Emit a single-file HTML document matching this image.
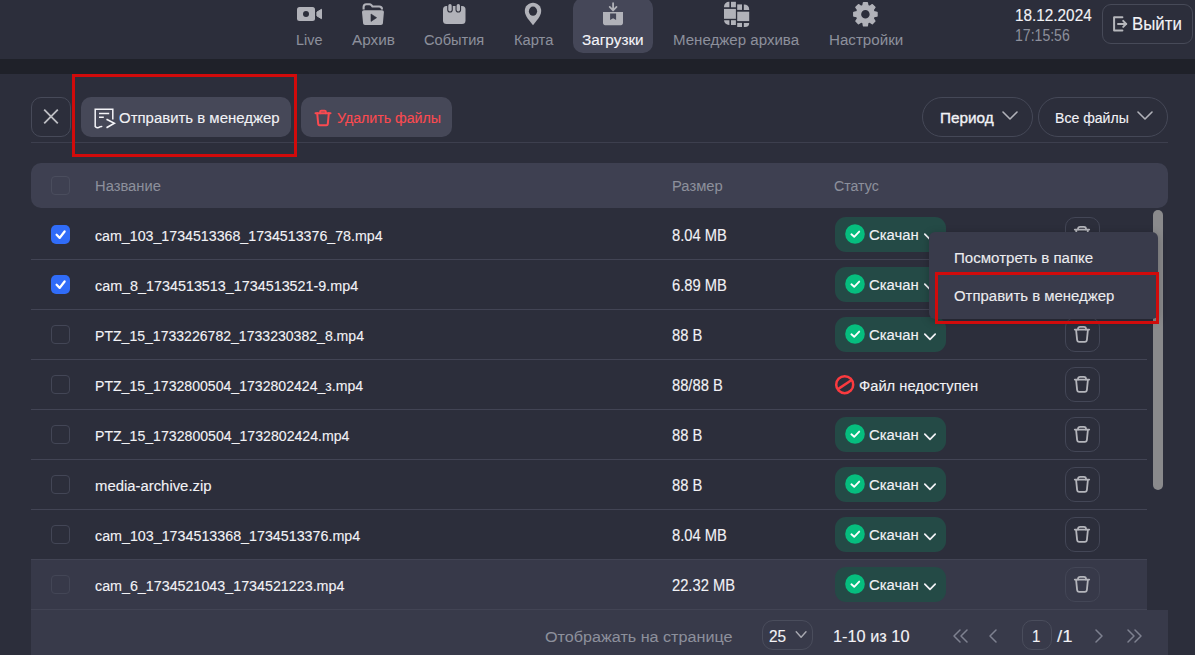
<!DOCTYPE html><html><head><meta charset="utf-8"><style>*{box-sizing:border-box;margin:0;padding:0}
html,body{width:1195px;height:655px;overflow:hidden;background:#2c2e3b;font-family:"Liberation Sans",sans-serif;color:#f2f2f6}
.a{position:absolute}
.hdr{left:0;top:0;width:1195px;height:59px;background:#2c2e3b}
.band{left:0;top:59px;width:1195px;height:15px;background:#1f2129}
.navt{top:30px;text-align:center;color:#8d909c;font-size:15px;line-height:18px;white-space:nowrap}
.navt.act{color:#f4f4f8}
.active{background:#454758;border-radius:10px}
.btn{border-radius:10px;background:#464858}
.lbl{white-space:nowrap;line-height:18px}
.sep{height:1px;background:#3d3f4e}
.rowsep{left:31px;width:1116px;height:1px;background:#424454}
.cb{left:51px;width:19px;height:19px;border:1.5px solid #434656;border-radius:4px}
.cbon{background:#306cf8;border:none;border-radius:5px}
.cb svg{position:absolute;left:0;top:0}
.fn{left:95px;font-size:14.2px;white-space:nowrap;line-height:18px}
.sz{left:672px;font-size:14.4px;white-space:nowrap;line-height:18px}
.badge{left:835px;width:111px;height:35px;border-radius:11px;background:#244a46}
.badge .ck{position:absolute;left:9.5px;top:7px;width:20px;height:20px}
.badge .ck svg{display:block}
.badge .bt{position:absolute;left:34px;top:8px;font-size:14.6px;line-height:18px}
.badge svg.chev{position:absolute;left:88px;top:15px}
.trash{left:1065px;width:35px;height:35px;border:1px solid #434656;border-radius:10px}
.tx{white-space:nowrap;transform-origin:0 0;-webkit-text-stroke:0.12px currentColor}
</style></head><body>
<div class="a hdr"></div><div class="a band"></div>
<div class="a active" style="left:573px;top:-2px;width:80px;height:55px"></div>
<svg class="a" style="left:297px;top:6px" width="26" height="16" viewBox="0 0 26 16"><rect x="0" y="1" width="18" height="14" rx="2.5" fill="#b1b2b9"/><circle cx="9" cy="8" r="3" fill="#2c2e3b"/><path d="M19.9 6.1 L24.5 3.3 V12.7 L19.9 9.9 Z" fill="#b1b2b9" stroke="#b1b2b9" stroke-width="1" stroke-linejoin="round"/></svg>
<svg class="a" style="left:361px;top:2px" width="24" height="24" viewBox="0 0 24 24"><path d="M2.6 7.6V5c0-1.6 1.1-2.8 2.7-2.8h3.1c.8 0 1.5.4 2 1l1 1.3h6.7c1.7 0 2.9 1.2 2.9 2.7v.4" fill="none" stroke="#b1b2b9" stroke-width="2.1"/><path d="M1 10.2c0-1.1.8-1.9 1.9-1.9h18.2c1.1 0 1.9.9 1.8 2l-1 11c-.1 1-.9 1.7-1.9 1.7H4c-1 0-1.8-.7-1.9-1.7z" fill="#b1b2b9"/><path d="M10 12v7.4l5.6-3.7z" fill="#2c2e3b" stroke="#2c2e3b" stroke-width=".6" stroke-linejoin="round"/></svg>
<svg class="a" style="left:442px;top:3px" width="24" height="22" viewBox="0 0 24 22"><rect x="1" y="3" width="22.5" height="18" rx="3.5" fill="#b1b2b9"/><rect x="5.2" y="0" width="5.6" height="9.5" rx="2.8" fill="#2c2e3b"/><rect x="13.5" y="0" width="5.6" height="9.5" rx="2.8" fill="#2c2e3b"/><rect x="6.3" y="1" width="3.4" height="7.5" rx="1.7" fill="#b1b2b9"/><rect x="14.6" y="1" width="3.4" height="7.5" rx="1.7" fill="#b1b2b9"/></svg>
<svg class="a" style="left:524px;top:2px" width="18" height="24" viewBox="0 0 18 24"><path d="M9 .8C4.3.8.8 4.4.8 9c0 2.6 1.3 5.2 2.9 7.6L9 23.2l5.3-6.6c1.6-2.4 2.9-5 2.9-7.6C17.2 4.4 13.7.8 9 .8z" fill="#b1b2b9"/><ellipse cx="9" cy="9.2" rx="4.1" ry="4.6" fill="#2c2e3b"/></svg>
<svg class="a" style="left:602px;top:2px" width="22" height="24" viewBox="0 0 22 24"><path d="M11.1 1.2V8.4M7.7 4.9L11.1 8.3L14.5 4.9" fill="none" stroke="#b1b2b9" stroke-width="1.8" stroke-linecap="round" stroke-linejoin="round"/><path d="M1 10H21V21.1c0 1.2-.9 2.1-2.1 2.1H3.1C1.9 23.2 1 22.3 1 21.1Z" fill="#b1b2b9"/><path d="M8.1 11.4H14.1V17.9L11.1 16.3L8.1 17.9Z" fill="#454758"/></svg>
<svg class="a" style="left:718px;top:0px" width="40" height="30" viewBox="0 0 40 30" fill="#b1b2b9"><path d="M6 7.3V6.8A5 5 0 0 1 11 1.8H11.4V7.3Z"/><rect x="13" y="1.8" width="4.9" height="5.5"/><rect x="6" y="8.9" width="11.9" height="9.9"/><path d="M6 20.2V20A5 5 0 0 0 11 25H11.4V20.2Z"/><rect x="13" y="20.2" width="4.9" height="4.8"/><rect x="19.2" y="4.4" width="4.8" height="5.5"/><path d="M25.8 4.4H26.2A5 5 0 0 1 31.2 9.4V9.9H25.8Z"/><rect x="19.2" y="11.7" width="12" height="9.4"/><rect x="19.2" y="22.9" width="4.8" height="4.1"/><path d="M25.8 22.9H31.2V23A4 4 0 0 1 27.2 27H25.8Z"/></svg>
<svg class="a" style="left:848px;top:0px" width="35" height="30" viewBox="0 0 35 30"><path fill="#b1b2b9" fill-rule="evenodd" stroke="#b1b2b9" stroke-width="1.5" stroke-linejoin="round" d="M14.97 5.74 L15.57 2.64 L19.23 2.64 L19.83 5.74 L21.67 6.50 L24.28 4.73 L26.87 7.32 L25.10 9.93 L25.86 11.77 L28.96 12.37 L28.96 16.03 L25.86 16.63 L25.10 18.47 L26.87 21.08 L24.28 23.67 L21.67 21.90 L19.83 22.66 L19.23 25.76 L15.57 25.76 L14.97 22.66 L13.13 21.90 L10.52 23.67 L7.93 21.08 L9.70 18.47 L8.94 16.63 L5.84 16.03 L5.84 12.37 L8.94 11.77 L9.70 9.93 L7.93 7.32 L10.52 4.73 L13.13 6.50Z M22.40 14.20A5.0 5.0 0 1 0 12.40 14.20A5.0 5.0 0 1 0 22.40 14.20Z"/></svg>
<!-- date/time -->
<div class="a" style="left:1102px;top:4px;width:91px;height:40px;border:1px solid #474a58;border-radius:9px"></div>
<svg class="a" style="left:1110px;top:14px" width="20" height="20" viewBox="0 0 20 20" fill="none" stroke="#b6b7bc" stroke-width="2" stroke-linecap="round" stroke-linejoin="round"><path d="M12.4 3.2H4.1V16.4H12.4"/><path d="M8 9.9H16.2"/><path d="M13.2 6.9L16.2 9.9L13.2 12.9"/></svg>

<!-- toolbar -->
<div class="a" style="left:31px;top:97px;width:40px;height:40px;border:1px solid #474a59;border-radius:10px"></div>
<svg class="a" style="left:41px;top:107px" width="20" height="20" viewBox="0 0 20 20" stroke="#bdbec3" stroke-width="1.8" stroke-linecap="butt"><path d="M3.2 2.7l13.6 13.6M16.8 2.7l-13.6 13.6"/></svg>
<div class="a btn" style="left:81px;top:97px;width:210px;height:40px"></div>
<svg class="a" style="left:94px;top:108px" width="22" height="22" viewBox="0 0 22 22" fill="none" stroke="#f4f4f8" stroke-width="1.5" stroke-linejoin="miter" stroke-linecap="butt"><path d="M1.2 19V1.2H18.8V11.5"/><path d="M1.2 18.6c1.6 1.4 3.2 1.4 4.6.3 .8-.6 1.6-.7 2.5-.2"/><path d="M5 5.5H15.2M5 9.2H9.8" stroke-width="1.6"/><path d="M12.5 11.2L20.4 15.3L12.5 19.8" stroke-width="1.7"/></svg>
<div class="a btn" style="left:301px;top:97px;width:151px;height:40px"></div>
<svg class="a" style="left:314px;top:109px" width="18" height="18" viewBox="0 0 18 18" fill="none" stroke="#fa4a50" stroke-width="2" stroke-linecap="round" stroke-linejoin="round"><path d="M1.5 4.2h15"/><path d="M6.2 4.2V2.8c0-.6.5-1.1 1.1-1.1h3.4c.6 0 1.1.5 1.1 1.1v1.4"/><path d="M3.2 4.2l1 10.8c.1.7.6 1.2 1.3 1.2h7c.7 0 1.2-.5 1.3-1.2l1-10.8"/></svg>
<div class="a" style="left:922px;top:97px;width:111px;height:40px;border:1px solid #454857;border-radius:20px"></div>
<svg class="a" style="left:1002px;top:110px" width="16" height="12" viewBox="0 0 16 12" fill="none" stroke="#b1b2b9" stroke-width="1.6" stroke-linecap="round" stroke-linejoin="round"><path d="M1 2l7 7 7-7"/></svg>
<div class="a" style="left:1038px;top:97px;width:130px;height:40px;border:1px solid #454857;border-radius:20px"></div>
<svg class="a" style="left:1137px;top:110px" width="16" height="12" viewBox="0 0 16 12" fill="none" stroke="#b1b2b9" stroke-width="1.6" stroke-linecap="round" stroke-linejoin="round"><path d="M1 2l7 7 7-7"/></svg>
<div class="a sep" style="left:31px;top:142px;width:1137px"></div>

<!-- table header -->
<div class="a" style="left:31px;top:163px;width:1137px;height:45px;background:#3e4051;border-radius:10px"></div>
<div class="a cb" style="top:176px;border-color:#4a4d5d"></div>

<div class="a cb cbon" style="top:225px"><svg width="19" height="19" viewBox="0 0 19 19"><path d="M5.6 9.8L8.7 12.9L13.6 6.5" fill="none" stroke="#fff" stroke-width="2.3" stroke-linecap="round" stroke-linejoin="round"/></svg></div>
<div class="a badge" style="top:217px"><div class="ck"><svg width="20" height="20" viewBox="0 0 20 20"><circle cx="10" cy="10" r="9.8" fill="#06be7e"/><path d="M6.4 10.3L9.2 12.8L14.2 7.6" fill="none" stroke="#fff" stroke-width="1.9" stroke-linecap="round" stroke-linejoin="round"/></svg></div><svg class="chev" width="14" height="10" viewBox="0 0 14 10" fill="none" stroke="#f2f2f6" stroke-width="1.7" stroke-linecap="round" stroke-linejoin="round"><path d="M1.8 2.2L7 7.4L12.2 2.2"/></svg></div>
<div class="a trash" style="top:217px"></div><svg class="a" style="left:1073px;top:225px" width="18" height="19" viewBox="0 0 18 19" fill="none" stroke="#b4b5bb" stroke-width="1.8" stroke-linecap="round" stroke-linejoin="round"><path d="M1.8 4.6H16.2"/><path d="M5 4.6V3.9C5 2.6 5.8 1.9 7.1 1.9H10.9C12.2 1.9 13 2.6 13 3.9V4.6"/><path d="M3.1 4.8L4.1 14.8C4.2 16.1 5 16.9 6.3 16.9H11.7C13 16.9 13.8 16.1 13.9 14.8L14.9 4.8"/></svg>
<div class="a rowsep" style="top:259px"></div>
<div class="a cb cbon" style="top:275px"><svg width="19" height="19" viewBox="0 0 19 19"><path d="M5.6 9.8L8.7 12.9L13.6 6.5" fill="none" stroke="#fff" stroke-width="2.3" stroke-linecap="round" stroke-linejoin="round"/></svg></div>
<div class="a badge" style="top:267px"><div class="ck"><svg width="20" height="20" viewBox="0 0 20 20"><circle cx="10" cy="10" r="9.8" fill="#06be7e"/><path d="M6.4 10.3L9.2 12.8L14.2 7.6" fill="none" stroke="#fff" stroke-width="1.9" stroke-linecap="round" stroke-linejoin="round"/></svg></div><svg class="chev" width="14" height="10" viewBox="0 0 14 10" fill="none" stroke="#f2f2f6" stroke-width="1.7" stroke-linecap="round" stroke-linejoin="round"><path d="M1.8 2.2L7 7.4L12.2 2.2"/></svg></div>
<div class="a trash" style="top:267px"></div><svg class="a" style="left:1073px;top:275px" width="18" height="19" viewBox="0 0 18 19" fill="none" stroke="#b4b5bb" stroke-width="1.8" stroke-linecap="round" stroke-linejoin="round"><path d="M1.8 4.6H16.2"/><path d="M5 4.6V3.9C5 2.6 5.8 1.9 7.1 1.9H10.9C12.2 1.9 13 2.6 13 3.9V4.6"/><path d="M3.1 4.8L4.1 14.8C4.2 16.1 5 16.9 6.3 16.9H11.7C13 16.9 13.8 16.1 13.9 14.8L14.9 4.8"/></svg>
<div class="a rowsep" style="top:309px"></div>
<div class="a cb" style="top:325px"></div>
<div class="a badge" style="top:317px"><div class="ck"><svg width="20" height="20" viewBox="0 0 20 20"><circle cx="10" cy="10" r="9.8" fill="#06be7e"/><path d="M6.4 10.3L9.2 12.8L14.2 7.6" fill="none" stroke="#fff" stroke-width="1.9" stroke-linecap="round" stroke-linejoin="round"/></svg></div><svg class="chev" width="14" height="10" viewBox="0 0 14 10" fill="none" stroke="#f2f2f6" stroke-width="1.7" stroke-linecap="round" stroke-linejoin="round"><path d="M1.8 2.2L7 7.4L12.2 2.2"/></svg></div>
<div class="a trash" style="top:317px"></div><svg class="a" style="left:1073px;top:325px" width="18" height="19" viewBox="0 0 18 19" fill="none" stroke="#b4b5bb" stroke-width="1.8" stroke-linecap="round" stroke-linejoin="round"><path d="M1.8 4.6H16.2"/><path d="M5 4.6V3.9C5 2.6 5.8 1.9 7.1 1.9H10.9C12.2 1.9 13 2.6 13 3.9V4.6"/><path d="M3.1 4.8L4.1 14.8C4.2 16.1 5 16.9 6.3 16.9H11.7C13 16.9 13.8 16.1 13.9 14.8L14.9 4.8"/></svg>
<div class="a rowsep" style="top:359px"></div>
<div class="a cb" style="top:375px"></div>
<svg class="a" style="left:834px;top:374px" width="21" height="21" viewBox="0 0 21 21" fill="none" stroke="#fb3a3f" stroke-width="2.5"><circle cx="10.7" cy="10.7" r="8.5"/><path d="M4 15.1L17.3 6.3"/></svg>
<div class="a trash" style="top:367px"></div><svg class="a" style="left:1073px;top:375px" width="18" height="19" viewBox="0 0 18 19" fill="none" stroke="#b4b5bb" stroke-width="1.8" stroke-linecap="round" stroke-linejoin="round"><path d="M1.8 4.6H16.2"/><path d="M5 4.6V3.9C5 2.6 5.8 1.9 7.1 1.9H10.9C12.2 1.9 13 2.6 13 3.9V4.6"/><path d="M3.1 4.8L4.1 14.8C4.2 16.1 5 16.9 6.3 16.9H11.7C13 16.9 13.8 16.1 13.9 14.8L14.9 4.8"/></svg>
<div class="a rowsep" style="top:409px"></div>
<div class="a cb" style="top:425px"></div>
<div class="a badge" style="top:417px"><div class="ck"><svg width="20" height="20" viewBox="0 0 20 20"><circle cx="10" cy="10" r="9.8" fill="#06be7e"/><path d="M6.4 10.3L9.2 12.8L14.2 7.6" fill="none" stroke="#fff" stroke-width="1.9" stroke-linecap="round" stroke-linejoin="round"/></svg></div><svg class="chev" width="14" height="10" viewBox="0 0 14 10" fill="none" stroke="#f2f2f6" stroke-width="1.7" stroke-linecap="round" stroke-linejoin="round"><path d="M1.8 2.2L7 7.4L12.2 2.2"/></svg></div>
<div class="a trash" style="top:417px"></div><svg class="a" style="left:1073px;top:425px" width="18" height="19" viewBox="0 0 18 19" fill="none" stroke="#b4b5bb" stroke-width="1.8" stroke-linecap="round" stroke-linejoin="round"><path d="M1.8 4.6H16.2"/><path d="M5 4.6V3.9C5 2.6 5.8 1.9 7.1 1.9H10.9C12.2 1.9 13 2.6 13 3.9V4.6"/><path d="M3.1 4.8L4.1 14.8C4.2 16.1 5 16.9 6.3 16.9H11.7C13 16.9 13.8 16.1 13.9 14.8L14.9 4.8"/></svg>
<div class="a rowsep" style="top:459px"></div>
<div class="a cb" style="top:475px"></div>
<div class="a badge" style="top:467px"><div class="ck"><svg width="20" height="20" viewBox="0 0 20 20"><circle cx="10" cy="10" r="9.8" fill="#06be7e"/><path d="M6.4 10.3L9.2 12.8L14.2 7.6" fill="none" stroke="#fff" stroke-width="1.9" stroke-linecap="round" stroke-linejoin="round"/></svg></div><svg class="chev" width="14" height="10" viewBox="0 0 14 10" fill="none" stroke="#f2f2f6" stroke-width="1.7" stroke-linecap="round" stroke-linejoin="round"><path d="M1.8 2.2L7 7.4L12.2 2.2"/></svg></div>
<div class="a trash" style="top:467px"></div><svg class="a" style="left:1073px;top:475px" width="18" height="19" viewBox="0 0 18 19" fill="none" stroke="#b4b5bb" stroke-width="1.8" stroke-linecap="round" stroke-linejoin="round"><path d="M1.8 4.6H16.2"/><path d="M5 4.6V3.9C5 2.6 5.8 1.9 7.1 1.9H10.9C12.2 1.9 13 2.6 13 3.9V4.6"/><path d="M3.1 4.8L4.1 14.8C4.2 16.1 5 16.9 6.3 16.9H11.7C13 16.9 13.8 16.1 13.9 14.8L14.9 4.8"/></svg>
<div class="a rowsep" style="top:509px"></div>
<div class="a cb" style="top:525px"></div>
<div class="a badge" style="top:517px"><div class="ck"><svg width="20" height="20" viewBox="0 0 20 20"><circle cx="10" cy="10" r="9.8" fill="#06be7e"/><path d="M6.4 10.3L9.2 12.8L14.2 7.6" fill="none" stroke="#fff" stroke-width="1.9" stroke-linecap="round" stroke-linejoin="round"/></svg></div><svg class="chev" width="14" height="10" viewBox="0 0 14 10" fill="none" stroke="#f2f2f6" stroke-width="1.7" stroke-linecap="round" stroke-linejoin="round"><path d="M1.8 2.2L7 7.4L12.2 2.2"/></svg></div>
<div class="a trash" style="top:517px"></div><svg class="a" style="left:1073px;top:525px" width="18" height="19" viewBox="0 0 18 19" fill="none" stroke="#b4b5bb" stroke-width="1.8" stroke-linecap="round" stroke-linejoin="round"><path d="M1.8 4.6H16.2"/><path d="M5 4.6V3.9C5 2.6 5.8 1.9 7.1 1.9H10.9C12.2 1.9 13 2.6 13 3.9V4.6"/><path d="M3.1 4.8L4.1 14.8C4.2 16.1 5 16.9 6.3 16.9H11.7C13 16.9 13.8 16.1 13.9 14.8L14.9 4.8"/></svg>
<div class="a rowsep" style="top:559px"></div>
<div class="a" style="left:31px;top:560px;width:1116px;height:50px;background:#373949"></div>
<div class="a cb" style="top:575px"></div>
<div class="a badge" style="top:567px"><div class="ck"><svg width="20" height="20" viewBox="0 0 20 20"><circle cx="10" cy="10" r="9.8" fill="#06be7e"/><path d="M6.4 10.3L9.2 12.8L14.2 7.6" fill="none" stroke="#fff" stroke-width="1.9" stroke-linecap="round" stroke-linejoin="round"/></svg></div><svg class="chev" width="14" height="10" viewBox="0 0 14 10" fill="none" stroke="#f2f2f6" stroke-width="1.7" stroke-linecap="round" stroke-linejoin="round"><path d="M1.8 2.2L7 7.4L12.2 2.2"/></svg></div>
<div class="a trash" style="top:567px"></div><svg class="a" style="left:1073px;top:575px" width="18" height="19" viewBox="0 0 18 19" fill="none" stroke="#b4b5bb" stroke-width="1.8" stroke-linecap="round" stroke-linejoin="round"><path d="M1.8 4.6H16.2"/><path d="M5 4.6V3.9C5 2.6 5.8 1.9 7.1 1.9H10.9C12.2 1.9 13 2.6 13 3.9V4.6"/><path d="M3.1 4.8L4.1 14.8C4.2 16.1 5 16.9 6.3 16.9H11.7C13 16.9 13.8 16.1 13.9 14.8L14.9 4.8"/></svg>
<div class="a rowsep" style="top:609px"></div>
<!-- footer -->
<div class="a" style="left:31px;top:610px;width:1137px;height:45px;background:#383a4a"></div>
<div class="a" style="left:762px;top:620px;width:51px;height:30px;border:1px solid #4a4d5c;border-radius:11px"></div>
<svg class="a" style="left:795px;top:630px" width="13" height="10" viewBox="0 0 13 10" fill="none" stroke="#a9aab2" stroke-width="1.4" stroke-linecap="round" stroke-linejoin="round"><path d="M1.2 1.8L6.1 7.2L11 1.8"/></svg>
<svg class="a" style="left:952px;top:629px" width="18" height="14" viewBox="0 0 18 14" fill="none" stroke="#7e8190" stroke-width="1.5" stroke-linecap="round" stroke-linejoin="round"><path d="M8 1L2 7l6 6M15 1L9 7l6 6"/></svg>
<svg class="a" style="left:987px;top:629px" width="12" height="14" viewBox="0 0 12 14" fill="none" stroke="#7e8190" stroke-width="1.5" stroke-linecap="round" stroke-linejoin="round"><path d="M9 1L3 7l6 6"/></svg>
<div class="a" style="left:1022px;top:620px;width:30px;height:30px;border:1px solid #4a4d5c;border-radius:10px"></div>
<svg class="a" style="left:1093px;top:629px" width="12" height="14" viewBox="0 0 12 14" fill="none" stroke="#7e8190" stroke-width="1.5" stroke-linecap="round" stroke-linejoin="round"><path d="M3 1l6 6-6 6"/></svg>
<svg class="a" style="left:1125px;top:629px" width="18" height="14" viewBox="0 0 18 14" fill="none" stroke="#7e8190" stroke-width="1.5" stroke-linecap="round" stroke-linejoin="round"><path d="M3 1l6 6-6 6M10 1l6 6-6 6"/></svg>

<!-- scrollbar -->
<div class="a" style="left:1153px;top:210px;width:10px;height:280px;border-radius:5px;background:#8a8a8c"></div>

<div class="a tx" style="left:296.05px;top:31.98px;font-size:15.50px;line-height:15.50px;color:#8d909c;font-weight:400;transform:scaleX(0.9282);-webkit-text-stroke:0.05px currentColor">Live</div>
<div class="a tx" style="left:351.61px;top:31.98px;font-size:15.50px;line-height:15.50px;color:#8d909c;font-weight:400;transform:scaleX(0.9871);-webkit-text-stroke:0.05px currentColor">Архив</div>
<div class="a tx" style="left:423.74px;top:31.98px;font-size:15.50px;line-height:15.50px;color:#8d909c;font-weight:400;transform:scaleX(0.9411);-webkit-text-stroke:0.05px currentColor">События</div>
<div class="a tx" style="left:513.54px;top:31.98px;font-size:15.50px;line-height:15.50px;color:#8d909c;font-weight:400;transform:scaleX(0.9479);-webkit-text-stroke:0.05px currentColor">Карта</div>
<div class="a tx" style="left:582.11px;top:31.98px;font-size:15.50px;line-height:15.50px;color:#f4f4f8;font-weight:400;transform:scaleX(0.9886)">Загрузки</div>
<div class="a tx" style="left:672.82px;top:31.98px;font-size:15.50px;line-height:15.50px;color:#8d909c;font-weight:400;transform:scaleX(0.9721);-webkit-text-stroke:0.05px currentColor">Менеджер архива</div>
<div class="a tx" style="left:828.62px;top:31.98px;font-size:15.50px;line-height:15.50px;color:#8d909c;font-weight:400;transform:scaleX(0.9769);-webkit-text-stroke:0.05px currentColor">Настройки</div>
<div class="a tx" style="left:1015.31px;top:7.91px;font-size:15.70px;line-height:15.70px;color:#f2f2f6;font-weight:400;transform:scaleX(0.9766)">18.12.2024</div>
<div class="a tx" style="left:1015.37px;top:27.51px;font-size:15.70px;line-height:15.70px;color:#8d909c;font-weight:400;transform:scaleX(0.8967);-webkit-text-stroke:0.05px currentColor">17:15:56</div>
<div class="a tx" style="left:1132.04px;top:14.61px;font-size:18.30px;line-height:18.30px;color:#f2f2f6;font-weight:400;transform:scaleX(0.9220)">Выйти</div>
<div class="a tx" style="left:119.33px;top:109.98px;font-size:15.50px;line-height:15.50px;color:#f2f2f6;font-weight:400;transform:scaleX(0.9643)">Отправить в менеджер</div>
<div class="a tx" style="left:337.16px;top:109.88px;font-size:15.50px;line-height:15.50px;color:#fb4a50;font-weight:400;transform:scaleX(0.9136)">Удалить файлы</div>
<div class="a tx" style="left:939.71px;top:109.88px;font-size:15.50px;line-height:15.50px;color:#f2f2f6;font-weight:400;transform:scaleX(0.9872);-webkit-text-stroke:0.35px currentColor">Период</div>
<div class="a tx" style="left:1054.67px;top:109.88px;font-size:15.50px;line-height:15.50px;color:#f2f2f6;font-weight:400;transform:scaleX(0.9081)">Все файлы</div>
<div class="a tx" style="left:94.84px;top:177.88px;font-size:15.50px;line-height:15.50px;color:#8d909c;font-weight:400;transform:scaleX(0.9503);-webkit-text-stroke:0.05px currentColor">Название</div>
<div class="a tx" style="left:671.54px;top:178.18px;font-size:15.50px;line-height:15.50px;color:#8d909c;font-weight:400;transform:scaleX(0.9521);-webkit-text-stroke:0.05px currentColor">Размер</div>
<div class="a tx" style="left:833.66px;top:178.18px;font-size:15.50px;line-height:15.50px;color:#8d909c;font-weight:400;transform:scaleX(0.9138);-webkit-text-stroke:0.05px currentColor">Статус</div>
<div class="a tx" style="left:545.17px;top:628.78px;font-size:15.50px;line-height:15.50px;color:#8d909c;font-weight:400;transform:scaleX(1.0416);-webkit-text-stroke:0.05px currentColor">Отображать на странице</div>
<div class="a tx" style="left:768.91px;top:628.61px;font-size:15.70px;line-height:15.70px;color:#f2f2f6;font-weight:400;transform:scaleX(0.9788)">25</div>
<div class="a tx" style="left:833.27px;top:628.61px;font-size:15.70px;line-height:15.70px;color:#f2f2f6;font-weight:400;transform:scaleX(1.0400)">1-10 из 10</div>
<div class="a tx" style="left:1032.32px;top:628.61px;font-size:15.70px;line-height:15.70px;color:#f2f2f6;font-weight:400;transform:scaleX(0.9594)">1</div>
<div class="a tx" style="left:1056.67px;top:628.61px;font-size:15.70px;line-height:15.70px;color:#f2f2f6;font-weight:400;transform:scaleX(1.1814)">/1</div>
<div class="a tx" style="left:94.86px;top:227.68px;font-size:15.50px;line-height:15.50px;color:#f2f2f6;font-weight:400;transform:scaleX(0.9166)">cam_103_1734513368_1734513376_78.mp4</div>
<div class="a tx" style="left:671.54px;top:227.51px;font-size:15.70px;line-height:15.70px;color:#f2f2f6;font-weight:400;transform:scaleX(0.9382)">8.04 MB</div>
<div class="a tx" style="left:869.13px;top:226.88px;font-size:15.50px;line-height:15.50px;color:#f2f2f6;font-weight:400;transform:scaleX(0.9611)">Скачан</div>
<div class="a tx" style="left:94.85px;top:277.68px;font-size:15.50px;line-height:15.50px;color:#f2f2f6;font-weight:400;transform:scaleX(0.9254)">cam_8_1734513513_1734513521-9.mp4</div>
<div class="a tx" style="left:671.54px;top:277.51px;font-size:15.70px;line-height:15.70px;color:#f2f2f6;font-weight:400;transform:scaleX(0.9382)">6.89 MB</div>
<div class="a tx" style="left:869.13px;top:276.88px;font-size:15.50px;line-height:15.50px;color:#f2f2f6;font-weight:400;transform:scaleX(0.9611)">Скачан</div>
<div class="a tx" style="left:94.87px;top:327.68px;font-size:15.50px;line-height:15.50px;color:#f2f2f6;font-weight:400;transform:scaleX(0.9072)">PTZ_15_1733226782_1733230382_8.mp4</div>
<div class="a tx" style="left:671.54px;top:327.51px;font-size:15.70px;line-height:15.70px;color:#f2f2f6;font-weight:400;transform:scaleX(0.9382)">88 B</div>
<div class="a tx" style="left:869.13px;top:326.88px;font-size:15.50px;line-height:15.50px;color:#f2f2f6;font-weight:400;transform:scaleX(0.9611)">Скачан</div>
<div class="a tx" style="left:94.87px;top:377.68px;font-size:15.50px;line-height:15.50px;color:#f2f2f6;font-weight:400;transform:scaleX(0.9091)">PTZ_15_1732800504_1732802424_з.mp4</div>
<div class="a tx" style="left:671.54px;top:377.51px;font-size:15.70px;line-height:15.70px;color:#f2f2f6;font-weight:400;transform:scaleX(0.9382)">88/88 B</div>
<div class="a tx" style="left:859.04px;top:377.68px;font-size:15.50px;line-height:15.50px;color:#f2f2f6;font-weight:400;transform:scaleX(0.9502)">Файл недоступен</div>
<div class="a tx" style="left:94.86px;top:427.68px;font-size:15.50px;line-height:15.50px;color:#f2f2f6;font-weight:400;transform:scaleX(0.9113)">PTZ_15_1732800504_1732802424.mp4</div>
<div class="a tx" style="left:671.54px;top:427.51px;font-size:15.70px;line-height:15.70px;color:#f2f2f6;font-weight:400;transform:scaleX(0.9382)">88 B</div>
<div class="a tx" style="left:869.13px;top:426.88px;font-size:15.50px;line-height:15.50px;color:#f2f2f6;font-weight:400;transform:scaleX(0.9611)">Скачан</div>
<div class="a tx" style="left:94.83px;top:477.68px;font-size:15.50px;line-height:15.50px;color:#f2f2f6;font-weight:400;transform:scaleX(0.9594)">media-archive.zip</div>
<div class="a tx" style="left:671.54px;top:477.51px;font-size:15.70px;line-height:15.70px;color:#f2f2f6;font-weight:400;transform:scaleX(0.9382)">88 B</div>
<div class="a tx" style="left:869.13px;top:476.88px;font-size:15.50px;line-height:15.50px;color:#f2f2f6;font-weight:400;transform:scaleX(0.9611)">Скачан</div>
<div class="a tx" style="left:94.86px;top:527.68px;font-size:15.50px;line-height:15.50px;color:#f2f2f6;font-weight:400;transform:scaleX(0.9212)">cam_103_1734513368_1734513376.mp4</div>
<div class="a tx" style="left:671.54px;top:527.51px;font-size:15.70px;line-height:15.70px;color:#f2f2f6;font-weight:400;transform:scaleX(0.9382)">8.04 MB</div>
<div class="a tx" style="left:869.13px;top:526.88px;font-size:15.50px;line-height:15.50px;color:#f2f2f6;font-weight:400;transform:scaleX(0.9611)">Скачан</div>
<div class="a tx" style="left:94.86px;top:577.68px;font-size:15.50px;line-height:15.50px;color:#f2f2f6;font-weight:400;transform:scaleX(0.9215)">cam_6_1734521043_1734521223.mp4</div>
<div class="a tx" style="left:671.54px;top:577.51px;font-size:15.70px;line-height:15.70px;color:#f2f2f6;font-weight:400;transform:scaleX(0.9382)">22.32 MB</div>
<div class="a tx" style="left:869.13px;top:576.88px;font-size:15.50px;line-height:15.50px;color:#f2f2f6;font-weight:400;transform:scaleX(0.9611)">Скачан</div>
<!-- dropdown -->
<div class="a" style="left:929px;top:232px;width:229px;height:87px;background:#393b4b;border-radius:6px;box-shadow:0 2px 8px rgba(0,0,0,.25)"></div>

<!-- red highlight boxes -->


<div class="a tx" style="left:953.62px;top:250.08px;font-size:15.50px;line-height:15.50px;color:#ececef;font-weight:400;transform:scaleX(0.9719)">Посмотреть в папке</div>
<div class="a tx" style="left:953.63px;top:288.18px;font-size:15.50px;line-height:15.50px;color:#ececef;font-weight:400;transform:scaleX(0.9631)">Отправить в менеджер</div>
<div class="a" style="left:72px;top:74px;width:225px;height:83px;border:3px solid #d10b0b"></div>
<div class="a" style="left:935px;top:272px;width:224px;height:52px;border:3px solid #d10b0b"></div>
</body></html>
